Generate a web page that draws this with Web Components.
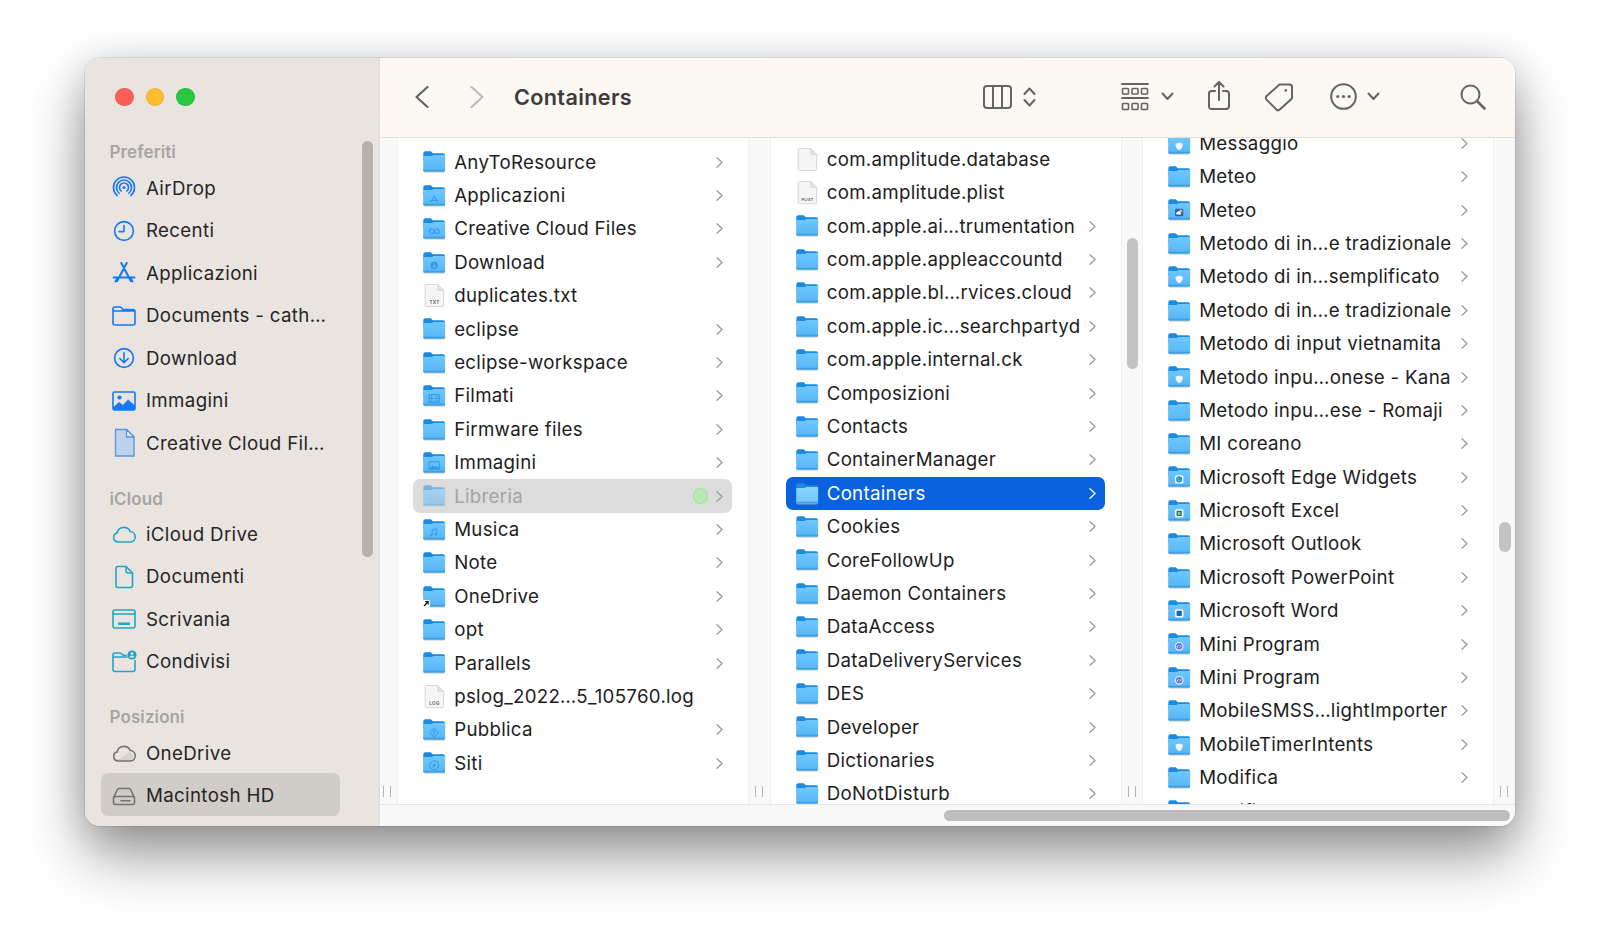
<!DOCTYPE html>
<html lang="it">
<head>
<meta charset="utf-8">
<title>Containers</title>
<style>
  html, body { margin: 0; height: 100%; background: #fff; overflow: hidden; }
  body { padding: 58px 0 0 85px; box-sizing: border-box; font-family: Inter, "Liberation Sans", sans-serif; }
</style>
</head>
<body>
<finder-window>
  <finder-sidebar slot="sidebar">
    <side-label>Preferiti</side-label>
    <side-item icon="airdrop">AirDrop</side-item>
    <side-item icon="clock">Recenti</side-item>
    <side-item icon="apps">Applicazioni</side-item>
    <side-item icon="folder">Documents - cath…</side-item>
    <side-item icon="download">Download</side-item>
    <side-item icon="photo">Immagini</side-item>
    <side-item icon="page">Creative Cloud Fil…</side-item>
    <side-label>iCloud</side-label>
    <side-item icon="cloud" tone="teal">iCloud Drive</side-item>
    <side-item icon="doc" tone="teal">Documenti</side-item>
    <side-item icon="desk" tone="teal">Scrivania</side-item>
    <side-item icon="shared" tone="teal">Condivisi</side-item>
    <side-label>Posizioni</side-label>
    <side-item icon="onedrive" tone="grey">OneDrive</side-item>
    <side-item icon="disk" tone="grey" selected>Macintosh HD</side-item>
  </finder-sidebar>
  <finder-toolbar slot="toolbar" title="Containers"></finder-toolbar>

  <finder-column slot="columns" top="7.5">
    <finder-row>AnyToResource</finder-row>
    <finder-row glyph="apps">Applicazioni</finder-row>
    <finder-row glyph="cc">Creative Cloud Files</finder-row>
    <finder-row glyph="down">Download</finder-row>
    <finder-row file="TXT">duplicates.txt</finder-row>
    <finder-row>eclipse</finder-row>
    <finder-row>eclipse-workspace</finder-row>
    <finder-row glyph="film">Filmati</finder-row>
    <finder-row>Firmware files</finder-row>
    <finder-row glyph="image">Immagini</finder-row>
    <finder-row glyph="lib" dimmed dot>Libreria</finder-row>
    <finder-row glyph="music">Musica</finder-row>
    <finder-row>Note</finder-row>
    <finder-row glyph="alias">OneDrive</finder-row>
    <finder-row>opt</finder-row>
    <finder-row>Parallels</finder-row>
    <finder-row file="LOG">pslog_2022…5_105760.log</finder-row>
    <finder-row glyph="public">Pubblica</finder-row>
    <finder-row glyph="safari">Siti</finder-row>
  </finder-column>

  <finder-column slot="columns" top="4.7" thumb="100,131">
    <finder-row file="">com.amplitude.database</finder-row>
    <finder-row file="PLIST">com.amplitude.plist</finder-row>
    <finder-row>com.apple.ai…trumentation</finder-row>
    <finder-row>com.apple.appleaccountd</finder-row>
    <finder-row>com.apple.bl…rvices.cloud</finder-row>
    <finder-row>com.apple.ic…searchpartyd</finder-row>
    <finder-row>com.apple.internal.ck</finder-row>
    <finder-row>Composizioni</finder-row>
    <finder-row>Contacts</finder-row>
    <finder-row>ContainerManager</finder-row>
    <finder-row selected>Containers</finder-row>
    <finder-row>Cookies</finder-row>
    <finder-row>CoreFollowUp</finder-row>
    <finder-row>Daemon Containers</finder-row>
    <finder-row>DataAccess</finder-row>
    <finder-row>DataDeliveryServices</finder-row>
    <finder-row>DES</finder-row>
    <finder-row>Developer</finder-row>
    <finder-row>Dictionaries</finder-row>
    <finder-row>DoNotDisturb</finder-row>
  </finder-column>

  <finder-column slot="columns" top="-11.4" thumb="384,30">
    <finder-row glyph="shield">Messaggio</finder-row>
    <finder-row>Meteo</finder-row>
    <finder-row glyph="weather">Meteo</finder-row>
    <finder-row>Metodo di in…e tradizionale</finder-row>
    <finder-row glyph="shield">Metodo di in…semplificato</finder-row>
    <finder-row>Metodo di in…e tradizionale</finder-row>
    <finder-row>Metodo di input vietnamita</finder-row>
    <finder-row glyph="shield">Metodo inpu…onese - Kana</finder-row>
    <finder-row>Metodo inpu…ese - Romaji</finder-row>
    <finder-row>MI coreano</finder-row>
    <finder-row glyph="edge">Microsoft Edge Widgets</finder-row>
    <finder-row glyph="excel">Microsoft Excel</finder-row>
    <finder-row>Microsoft Outlook</finder-row>
    <finder-row>Microsoft PowerPoint</finder-row>
    <finder-row glyph="word">Microsoft Word</finder-row>
    <finder-row glyph="mini">Mini Program</finder-row>
    <finder-row glyph="mini">Mini Program</finder-row>
    <finder-row>MobileSMSS…lightImporter</finder-row>
    <finder-row glyph="shield">MobileTimerIntents</finder-row>
    <finder-row>Modifica</finder-row>
    <finder-row>Modifiche</finder-row>
  </finder-column>
</finder-window>

<script>
// window frame: sidebar on the left, toolbar + columns + footer on the right
class FinderWindow extends HTMLElement {
  constructor() {
    super();
    this.attachShadow({ mode: 'open' });
    this.shadowRoot.innerHTML = `
      <style>
        :host {
          display: flex;
          width: 1430px;
          height: 768px;
          border-radius: 15px;
          background: #fff;
          color: #1f1f1f;
          overflow: hidden;
          box-shadow: 0 0 0 1px rgba(0,0,0,.08), 0 30px 58px rgba(0,0,0,.4), 0 4px 36px rgba(0,0,0,.14);
        }
        .main { flex: 1; min-width: 0; display: flex; flex-direction: column; }
        .browser { flex: 1; min-height: 0; display: flex; background: #f9f9f9; }
        .lead { width: 17px; flex: none; display: flex; align-items: flex-end; justify-content: center; padding-bottom: 7px; box-sizing: border-box; }
        .grip { width: 8px; height: 11px; margin-right: 3px; border-left: 1px solid #b4b4b4; border-right: 1px solid #b4b4b4; box-sizing: border-box; }
        .footer { height: 22px; flex: none; box-sizing: border-box; border-top: 1px solid #e4e4e4; background: #f9f9f9; display: flex; justify-content: flex-end; padding: 5px 5px 0 0; }
        .hbar { width: 566px; height: 11px; border-radius: 6px; background: #bdbdbd; }
      </style>
      <slot name="sidebar"></slot>
      <div class="main">
        <slot name="toolbar"></slot>
        <div class="browser">
          <div class="lead"><div class="grip"></div></div>
          <slot name="columns"></slot>
        </div>
        <div class="footer"><div class="hbar"></div></div>
      </div>
    `;
  }
}

class FinderSidebar extends HTMLElement {
  constructor() {
    super();
    this.attachShadow({ mode: 'open' });
    this.shadowRoot.innerHTML = `
      <style>
        :host {
          display: block;
          position: relative;
          width: 295px;
          flex: none;
          box-sizing: border-box;
          background: #e9e4e0;
          border-right: 1px solid #e0dcd8;
        }
        .lights { display: flex; gap: 12px; padding: 29.5px 0 0 30px; height: 50px; box-sizing: border-box; margin-bottom: 31.2px; }
        .lights i { width: 18.6px; height: 18.6px; border-radius: 50%; box-sizing: border-box; border: 1px solid rgba(0,0,0,.07); }
        .scroll { position: absolute; left: 277px; top: 83px; width: 11px; height: 416px; border-radius: 6px; background: #b6b1ad; }
      </style>
      <div class="lights">
        <i style="background:#fe5f57"></i><i style="background:#febc2e"></i><i style="background:#28c840"></i>
      </div>
      <slot></slot>
      <div class="scroll"></div>
    `;
  }
}

class SideLabel extends HTMLElement {
  constructor() {
    super();
    this.attachShadow({ mode: 'open' });
    this.shadowRoot.innerHTML = `
      <style>
        :host {
          display: flex;
          align-items: center;
          height: 28px;
          box-sizing: border-box;
          padding: 0 0 3px 24.5px;
          font-size: 17px;
          font-weight: 600;
          letter-spacing: .1px;
          color: #a8a4a1;
        }
        :host(:not(:first-of-type)) { margin-top: 21px; padding-bottom: 1.5px; }
      </style>
      <slot></slot>
    `;
  }
}

const SIDE_ICONS = {
  airdrop: '<path d="M5.25 19.54A10.5 10.5 0 1 1 18.75 19.54M7.18 17.25A7.5 7.5 0 1 1 16.82 17.25M9.11 14.95A4.5 4.5 0 1 1 14.89 14.95"/><circle cx="12" cy="11.5" r="1.5" fill="currentColor" stroke="none"/>',
  clock: '<circle cx="12" cy="12" r="9.4"/><path d="M12 6.5V12.6H7"/>',
  apps: '<path stroke-width="2" d="M9.3 2 18.8 20M14.7 2 5.2 20M1.5 16.5H22.5M3.5 20.5 5.5 17M20.5 20.5 18.5 17"/>',
  folder: '<path d="M1 7V5a2 2 0 0 1 2-2h5.5L11 5.5h10a2 2 0 0 1 2 2V19a2 2 0 0 1-2 2H3a2 2 0 0 1-2-2V7H23"/>',
  download: '<circle cx="12" cy="12" r="9.4"/><path d="M12 6.8V16.5M7.8 12.5 12 16.7 16.2 12.5"/>',
  photo: '<rect x="1" y="3" width="22" height="18" rx="1.5"/><path fill="currentColor" stroke="none" d="M1 18.5 7 13 11 16 16 10.5 23 16.5V21H1Z"/><circle cx="7.5" cy="8.5" r="2.1" fill="currentColor" stroke="none"/>',
  page: '<path fill="#bdd2ee" stroke="#5b92e2" stroke-width="1.3" d="M3.5-1.5H14.5L22 6V25H3.5Z"/><path stroke="#5b92e2" stroke-width="1.3" fill="#e6eefa" d="M14.5-1.5V6H22Z"/>',
  cloud: '<path d="M6 20a4.6 4.6 0 0 1-1-9A7 7 0 0 1 18.2 9.5 5.3 5.3 0 0 1 19 20Z"/>',
  doc: '<path d="M6 1.5h8L20.5 8v12.5a2 2 0 0 1-2 2H6a2 2 0 0 1-2-2v-17a2 2 0 0 1 2-2Z"/><path d="M14 1.5V6a2 2 0 0 0 2 2h4.5"/>',
  desk: '<rect x="1" y="3" width="22" height="18" rx="2"/><path d="M1 7H23"/><path stroke-width="2.4" d="M7 16.8H17"/>',
  shared: '<path d="M15 7H1V5a2 2 0 0 1 2-2h5.5L11 5.2h3M1 7V19.5a2 2 0 0 0 2 2H21a2 2 0 0 0 2-2V10.5"/><circle cx="20" cy="5" r="4.6" fill="currentColor" stroke="none"/><circle cx="20" cy="3.6" r="1.4" fill="#e9e4e0" stroke="none"/><path fill="#e9e4e0" stroke="none" d="M17.6 7.6a2.4 2 0 0 1 4.8 0Z"/>',
  onedrive: '<path fill="#d6d2ce" stroke="none" d="M4 19.5 18 11l3.5 3-1 5.5Z"/><path d="M6 20a4.6 4.6 0 0 1-1-9A7 7 0 0 1 18.2 9.5 5.3 5.3 0 0 1 19 20Z"/>',
  disk: '<path d="M1.5 13.5 5.5 5.5A2 2 0 0 1 7.3 4.5H16.7A2 2 0 0 1 18.5 5.5L22.5 13.5M3.5 12.5H20.5A2 2 0 0 1 22.5 14.5V18.5A2 2 0 0 1 20.5 20.5H3.5A2 2 0 0 1 1.5 18.5V14.5A2 2 0 0 1 3.5 12.5Z"/><path stroke-width="1.5" stroke-dasharray="1 1" d="M9 16.8H19"/>'
};
const TONES = { blue: '#1479f6', teal: '#22a5c5', grey: '#75716e' };

class SideItem extends HTMLElement {
  constructor() {
    super();
    this.attachShadow({ mode: 'open' });
  }

  connectedCallback() {
    const tone = TONES[this.getAttribute('tone') || 'blue'];
    const icon = SIDE_ICONS[this.getAttribute('icon')];
    this.shadowRoot.innerHTML = `
      <style>
        :host {
          display: flex;
          align-items: center;
          height: 42.45px;
          width: 239.3px;
          margin-left: 15.7px;
          padding-left: 11px;
          box-sizing: border-box;
          border-radius: 7px;
          font-size: 18.7px;
          letter-spacing: .35px;
          color: #262524;
          white-space: nowrap;
        }
        :host([selected]) { background: #d0ccc8; margin-top: -1px; height: 43px; padding-top: 1.5px; }
        svg { width: 24px; height: 24px; margin-right: 10.3px; flex: none; overflow: visible; color: ${tone}; }
      </style>
      <svg viewBox="0 0 24 24" fill="none" stroke="currentColor" stroke-width="1.6" stroke-linecap="round" stroke-linejoin="round">${icon}</svg>
      <slot></slot>
    `;
  }
}

class FinderToolbar extends HTMLElement {
  constructor() {
    super();
    this.attachShadow({ mode: 'open' });
  }

  connectedCallback() {
    this.shadowRoot.innerHTML = `
      <style>
        :host {
          display: flex;
          align-items: center;
          flex: none;
          height: 80px;
          box-sizing: border-box;
          padding: 0 0 2px 35px;
          background: linear-gradient(#fdf8f3, #fbf7f2);
          border-bottom: 1px solid #e4e1dd;
        }
        svg { flex: none; fill: none; stroke: #646464; stroke-width: 2; stroke-linecap: round; stroke-linejoin: round; }
        .title { font-size: 21.6px; font-weight: 600; letter-spacing: .36px; color: #3b3b3b; margin-left: 30px; width: 469px; flex: none; }
      </style>
      <svg width="14" height="22" viewBox="0 0 14 22" style="stroke-width:2.2"><path d="M12.5 1 1.5 11 12.5 21"/></svg>
      <svg width="14" height="22" viewBox="0 0 14 22" style="margin-left:41px;stroke:#bcbcbc;stroke-width:2.2"><path d="M1.5 1 12.5 11 1.5 21"/></svg>
      <div class="title">${this.getAttribute('title')}</div>
      <svg width="29" height="24" viewBox="0 0 29 24"><rect x="1" y="1" width="27" height="22" rx="3"/><path d="M10 1V23M19 1V23"/></svg>
      <svg width="13" height="20" viewBox="0 0 13 20" style="margin-left:11px"><path d="M1.5 7 6.5 1.5 11.5 7M1.5 13 6.5 18.5 11.5 13"/></svg>
      <svg width="28" height="28" viewBox="0 0 28 28" style="margin-left:85px;stroke-width:1.6"><path stroke-width="1.9" d="M1 1H27M1 15H27"/><rect x="1.5" y="5.5" width="6" height="5.5" rx=".8"/><rect x="11" y="5.5" width="6" height="5.5" rx=".8"/><rect x="20.5" y="5.5" width="6" height="5.5" rx=".8"/><rect x="1.5" y="20.5" width="6" height="6" rx=".8"/><rect x="11" y="20.5" width="6" height="6" rx=".8"/><rect x="20.5" y="20.5" width="6" height="6" rx=".8"/></svg>
      <svg width="13" height="9" viewBox="0 0 13 9" style="margin-left:12px"><path d="M1.5 1.5 6.5 7 11.5 1.5"/></svg>
      <svg width="22" height="29" viewBox="0 0 22 29" style="margin-left:34px;margin-top:-3px"><path d="M7 10H3.5A2.5 2.5 0 0 0 1 12.5V25.5A2.5 2.5 0 0 0 3.5 28H18.5A2.5 2.5 0 0 0 21 25.5V12.5A2.5 2.5 0 0 0 18.5 10H15M11 19V1.5M6.5 5.5 11 1 15.5 5.5"/></svg>
      <svg width="30" height="30" viewBox="0 0 30 30" style="margin-left:34px"><path d="M15.5 2.5H25.5A2.5 2.5 0 0 1 28 5V15.5A2.5 2.5 0 0 1 27.2 17.3L15.8 27.6A2.5 2.5 0 0 1 12.4 27.5L2.5 17.6A2.5 2.5 0 0 1 2.6 14Z"/><circle cx="21.8" cy="8.4" r="1.3" fill="#646464" stroke="none"/></svg>
      <svg width="27" height="27" viewBox="0 0 27 27" style="margin-left:36px"><circle cx="13.5" cy="13.5" r="12.3"/><g fill="#646464" stroke="none"><circle cx="7.8" cy="13.5" r="1.6"/><circle cx="13.5" cy="13.5" r="1.6"/><circle cx="19.2" cy="13.5" r="1.6"/></g></svg>
      <svg width="13" height="9" viewBox="0 0 13 9" style="margin-left:10px"><path d="M1.5 1.5 6.5 7 11.5 1.5"/></svg>
      <svg width="26" height="26" viewBox="0 0 26 26" style="margin-left:80px"><circle cx="10.5" cy="10.5" r="9"/><path stroke-width="2.6" d="M17 17 24.5 24.5"/></svg>
    `;
  }
}

// column = white list + grey gutter holding the resize grip and the scroll thumb
class FinderColumn extends HTMLElement {
  constructor() {
    super();
    this.attachShadow({ mode: 'open' });
  }

  connectedCallback() {
    const top = this.getAttribute('top') || 0;
    const thumb = this.getAttribute('thumb');
    let thumbHtml = '';
    if (thumb) {
      const [y, h] = thumb.split(',');
      thumbHtml = `<div class="thumb" style="top:${y}px;height:${h}px"></div>`;
    }
    this.shadowRoot.innerHTML = `
      <style>
        :host { display: flex; width: 372.5px; flex: none; height: 100%; }
        .list {
          width: 351px;
          flex: none;
          height: 100%;
          box-sizing: border-box;
          overflow: hidden;
          background: #fff;
          border-left: 1px solid #efefef;
          padding: 0 16px 0 15px;
        }
        .inner { margin-top: ${top}px; }
        .gutter { position: relative; flex: 1; display: flex; align-items: flex-end; justify-content: center; padding-bottom: 7px; border-left: 1px solid #efefef; }
        .grip { width: 8px; height: 11px; border-left: 1px solid #b4b4b4; border-right: 1px solid #b4b4b4; box-sizing: border-box; }
        .thumb { position: absolute; left: 5px; width: 11.5px; border-radius: 6px; background: #c2c2c2; }
      </style>
      <div class="list"><div class="inner"><slot></slot></div></div>
      <div class="gutter"><div class="grip"></div>${thumbHtml}</div>
    `;
  }
}

// small marks printed on the folder front
const GLYPHS = {
  apps: '<path d="M8 16.5 11 10.5 14 16.5M7.2 15H14.8" fill="none" stroke="#2f97e2" stroke-width=".9"/>',
  cc: '<path d="M8.6 15.4a2.4 2.4 0 0 1 0-4.8c2 0 3 4.8 4.8 4.8a2.4 2.4 0 0 0 0-4.8c-1.8 0-2.8 4.8-4.8 4.8Z" fill="none" stroke="#2f97e2" stroke-width="1"/>',
  down: '<circle cx="11" cy="13" r="3.6" fill="#2f97e2"/><path d="M11 11v4M9.4 13.6 11 15.2 12.6 13.6" fill="none" stroke="#6fc6fd" stroke-width=".9"/>',
  film: '<rect x="6" y="9.5" width="10" height="7.5" rx=".7" fill="none" stroke="#2f97e2" stroke-width="1"/><path d="M6 13.2H16M8.5 9.5V17M13.5 9.5V17" stroke="#2f97e2" stroke-width=".7"/>',
  image: '<rect x="6" y="9.5" width="10" height="7.5" rx=".7" fill="none" stroke="#2f97e2" stroke-width="1"/><path d="M6.5 16.5 9.5 13 12 15 13.6 13.6 15.5 16.5Z" fill="#2f97e2"/>',
  lib: '<path d="M9 11 7 13 9 15M13 11 15 13 13 15" fill="none" stroke="#2f97e2" stroke-width=".8" stroke-dasharray="1 .7"/>',
  music: '<path d="M9 16V10.5L13.5 9.5V15" fill="none" stroke="#2f97e2" stroke-width=".9"/><circle cx="8" cy="16" r="1.1" fill="#2f97e2"/><circle cx="12.5" cy="15" r="1.1" fill="#2f97e2"/>',
  alias: '<rect x="-.6" y="13.6" width="7.4" height="7.4" rx="1.2" fill="#fff"/><path d="M1 19.6 4.8 15.6M2.2 15.2H5V18" fill="none" stroke="#111" stroke-width="1.2"/>',
  public: '<path d="M11 8.6 15.6 13.2 11 17.8 6.4 13.2Z" fill="none" stroke="#2f97e2" stroke-width=".9"/><path d="M11 15.8V10.8M9.4 12.4 11 10.8 12.6 12.4" fill="none" stroke="#2f97e2" stroke-width=".8"/>',
  safari: '<circle cx="11" cy="13" r="4.4" fill="none" stroke="#2f97e2" stroke-width=".9"/><path d="M13 11 11.7 13.7 9 15 10.3 12.3Z" fill="#2f97e2"/>',
  shield: '<path d="M11 9.2 14.6 10.5C14.6 13.5 13.4 15.8 11 17 8.6 15.8 7.4 13.5 7.4 10.5Z" fill="#f2f8fd"/>',
  weather: '<rect x="7" y="9.5" width="8" height="7.5" rx="1.4" fill="#1e5fc4"/><circle cx="12.5" cy="11.8" r="1.5" fill="#f5c243"/><path d="M8.5 15.2a1.3 1.3 0 0 1 .5-2.3 1.6 1.6 0 0 1 3 .4 1 1 0 0 1 .3 1.9Z" fill="#fff"/>',
  edge: '<rect x="6.8" y="9" width="8.4" height="8.2" rx="1.6" fill="#f5fafe"/><circle cx="11" cy="13.1" r="3" fill="#1a8fd0"/><path d="M11 11.6a1.5 1.5 0 1 0 1.5 1.8" fill="none" stroke="#48d08d" stroke-width="1.1"/>',
  excel: '<rect x="6.8" y="9" width="8.4" height="8.2" rx="1.6" fill="#f5fafe"/><rect x="8.4" y="10.6" width="5.2" height="5" rx=".6" fill="#1b7a45"/><path d="M9.8 11.8 12 14.6M12 11.8 9.8 14.6" stroke="#fff" stroke-width=".7"/>',
  word: '<rect x="6.8" y="9" width="8.4" height="8.2" rx="1.6" fill="#f5fafe"/><rect x="8.4" y="10.6" width="5.2" height="5" rx=".6" fill="#1c5fc0"/>',
  mini: '<circle cx="11" cy="13" r="4.3" fill="#eef0ff"/><circle cx="11" cy="13" r="3.2" fill="#6a72de"/><path d="M9.5 14.4a1 1 0 0 1 0-1.6l1.2-.9M12.5 11.6a1 1 0 0 1 0 1.6l-1.2.9" fill="none" stroke="#fff" stroke-width=".7"/>'
};

class FinderRow extends HTMLElement {
  constructor() {
    super();
    this.attachShadow({ mode: 'open' });
  }

  folderSvg() {
    const glyph = GLYPHS[this.getAttribute('glyph')] || '';
    const selected = this.hasAttribute('selected');
    const top = selected ? '#8ad6ff' : '#6fc7fe';
    const low = selected ? '#6cc4fb' : '#56b6f6';
    return `<svg class="icon" width="22.4" height="21.5" viewBox="0 0 22 21" style="overflow:visible">
      <defs><linearGradient id="g" x1="0" y1="0" x2="0" y2="1"><stop offset="0" stop-color="${top}"/><stop offset="1" stop-color="${low}"/></linearGradient></defs>
      <rect x=".3" y="6" width="21.4" height="15" rx="1.6" fill="#b0b0b0" opacity=".75"/>
      <path d="M.3 2.2A2 2 0 0 1 2.3 .2H7.6L9.6 2.2H19.7A2 2 0 0 1 21.7 4.2V9H.3Z" fill="#1a8be0"/>
      <path d="M.3 4.8H8.8L10.2 3.8H21.7V18.8A1.4 1.4 0 0 1 20.3 20.2H1.7A1.4 1.4 0 0 1 .3 18.8Z" fill="url(#g)"/>
      <path d="M.3 18.4V18.8A1.4 1.4 0 0 0 1.7 20.2H20.3A1.4 1.4 0 0 0 21.7 18.8V18.4Z" fill="#3d9fe6"/>
      ${glyph}
    </svg>`;
  }

  fileSvg(label) {
    const mark = label
      ? `<text x="9.8" y="19.6" text-anchor="middle" font-family="Inter, sans-serif" font-size="${label.length > 3 ? 3.8 : 4.6}" font-weight="600" fill="#555">${label}</text>`
      : '';
    return `<svg class="icon" width="22.4" height="23" viewBox="0 0 22 23" style="overflow:visible">
      <g transform="translate(1.5 0)">
      <path d="M1.5.5H13L19 6.5V21.4A1.2 1.2 0 0 1 17.8 22.6H1.7A1.2 1.2 0 0 1 .5 21.4V1.5A1 1 0 0 1 1.5.5Z" fill="#f5f5f5" stroke="#d2d2d2" stroke-width=".9"/>
      <path d="M13 .5V6.5H19Z" fill="#e3e3e3" stroke="#cfcfcf" stroke-width=".6"/>
      ${mark}
      </g>
    </svg>`;
  }

  connectedCallback() {
    const isFile = this.hasAttribute('file');
    const selected = this.hasAttribute('selected');
    const icon = isFile ? this.fileSvg(this.getAttribute('file')) : this.folderSvg();
    const chevron = isFile ? '' : `<svg class="chev" width="7" height="11" viewBox="0 0 7 11"><path d="M1 .8 6 5.5 1 10.2"/></svg>`;
    const dot = this.hasAttribute('dot') ? '<span class="dot"></span>' : '';
    this.shadowRoot.innerHTML = `
      <style>
        :host {
          display: flex;
          align-items: center;
          height: 33.4px;
          padding: 0 9px 0 10px;
          box-sizing: border-box;
          border-radius: 7px;
          font-size: 18.7px;
          letter-spacing: .29px;
          color: #1d1d1d;
          white-space: nowrap;
        }
        :host([selected]) { background: #0a62de; color: #fff; }
        :host([dimmed]) { background: #dcdcdc; color: #a3a3a3; }
        :host([dimmed]) .icon { opacity: .5; }
        .icon { flex: none; margin-right: 8.8px; }
        .label { flex: 1; min-width: 0; }
        .chev { flex: none; fill: none; stroke: ${selected ? '#fff' : '#9b9b9b'}; stroke-width: 1.3; stroke-linecap: round; stroke-linejoin: round; }
        .dot { width: 15.5px; height: 15.5px; flex: none; border-radius: 50%; background: #b6e9b1; border: 1px solid #a3dd9f; box-sizing: border-box; margin-right: 8px; }
      </style>
      ${icon}
      <span class="label"><slot></slot></span>
      ${dot}
      ${chevron}
    `;
  }
}

customElements.define('finder-window', FinderWindow);
customElements.define('finder-sidebar', FinderSidebar);
customElements.define('side-label', SideLabel);
customElements.define('side-item', SideItem);
customElements.define('finder-toolbar', FinderToolbar);
customElements.define('finder-column', FinderColumn);
customElements.define('finder-row', FinderRow);
</script>
</body>
</html>
